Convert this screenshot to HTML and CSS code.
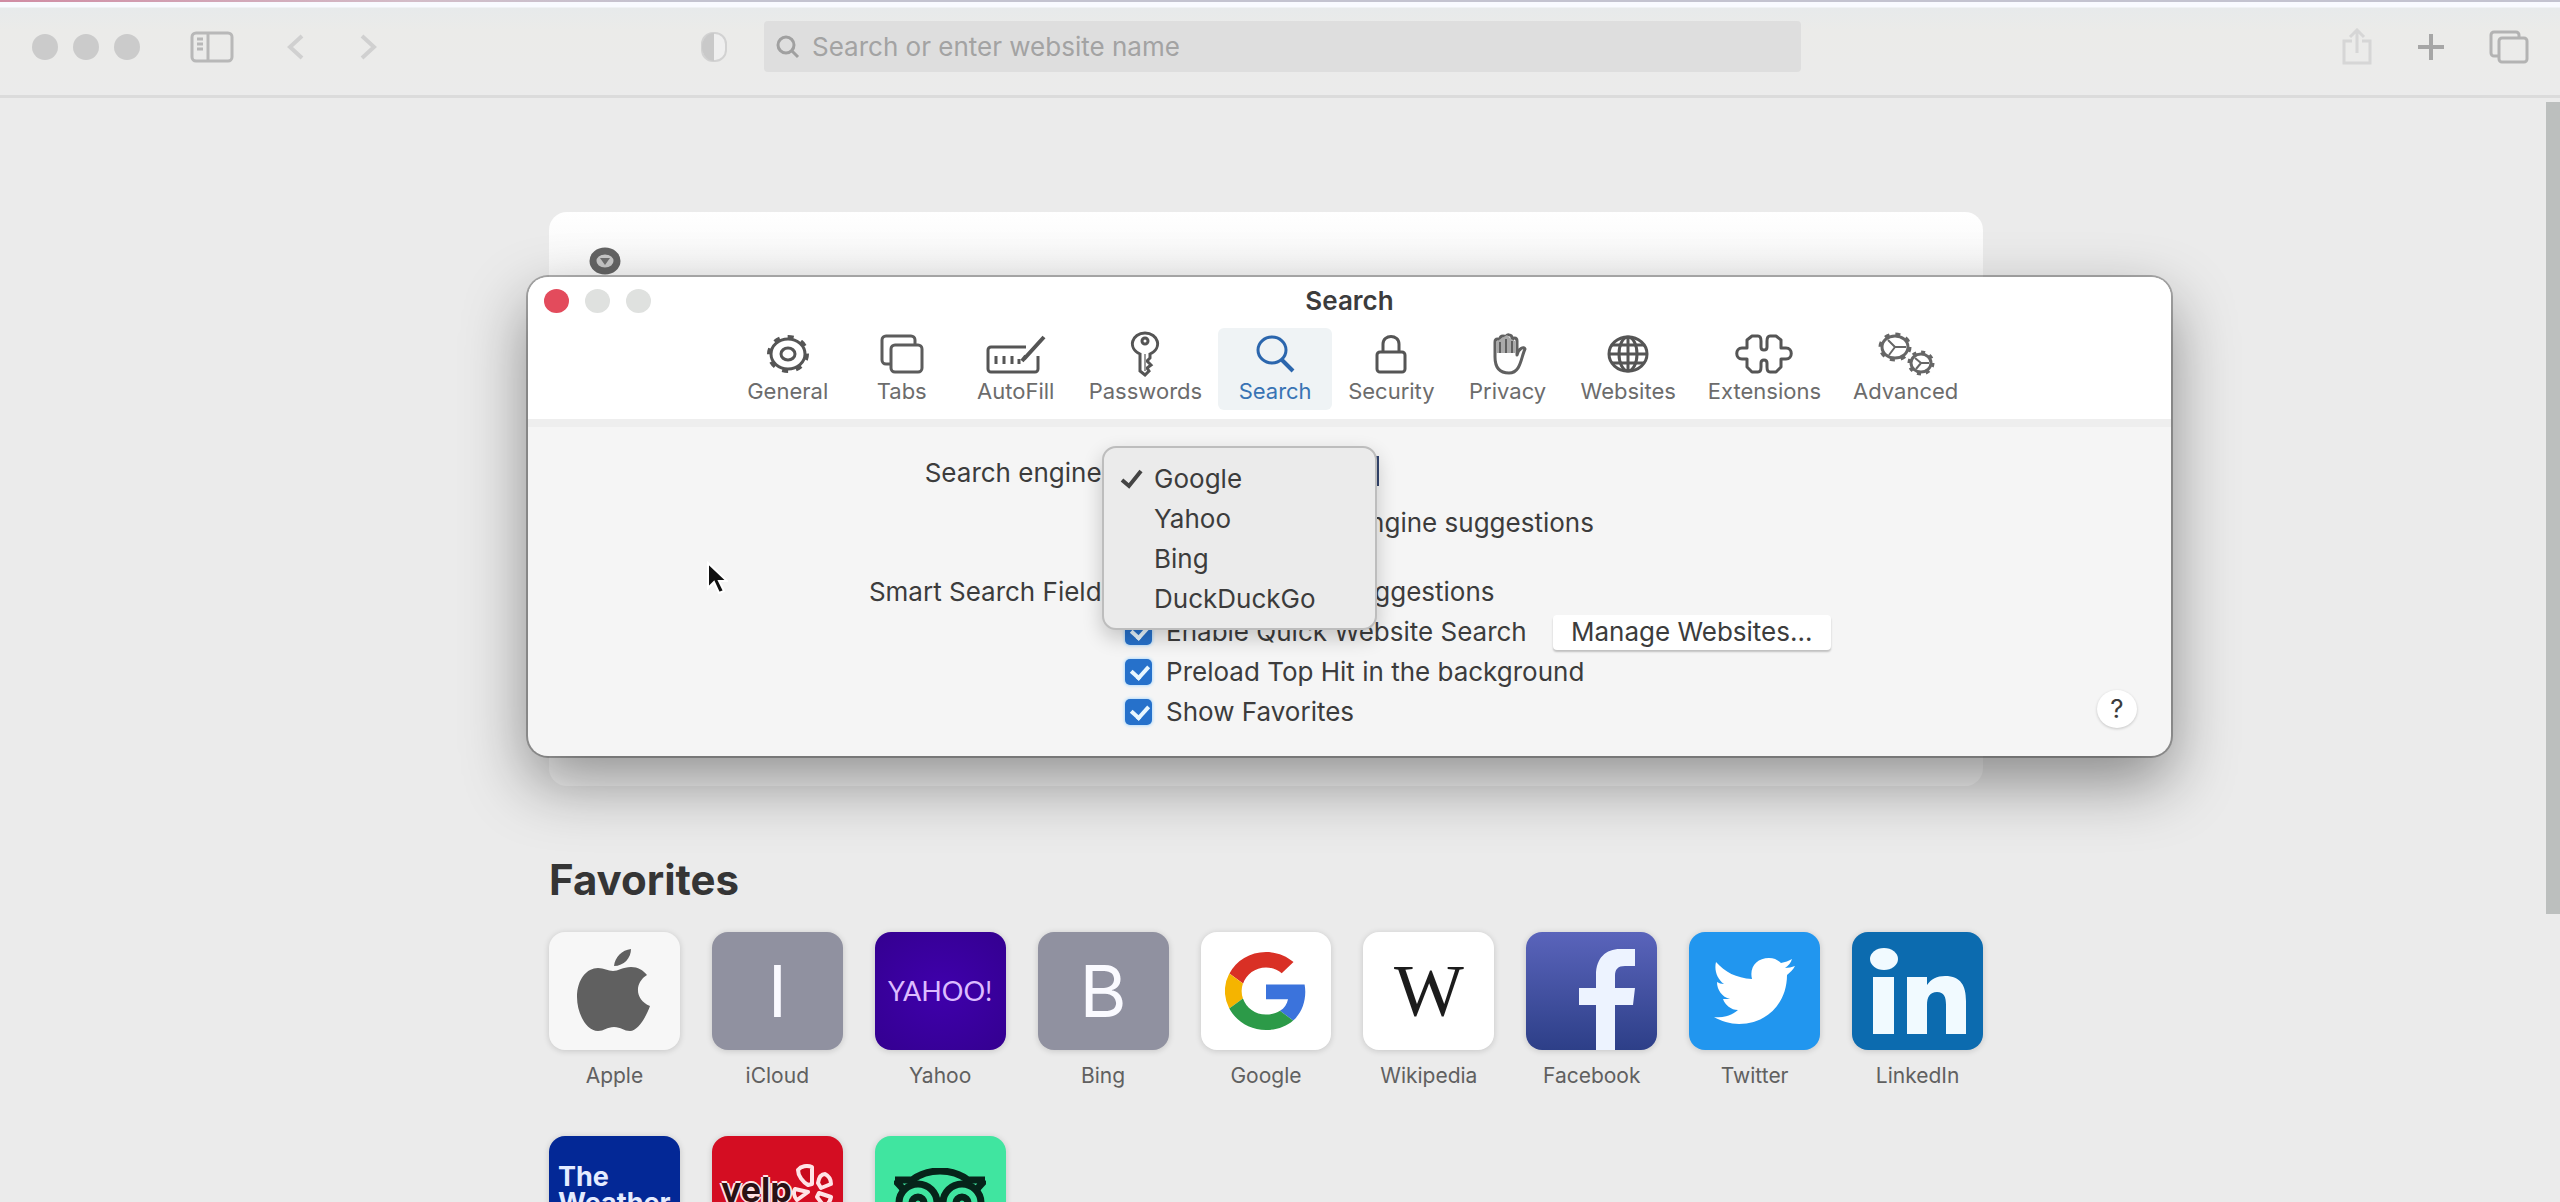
FILE: index.html
```html
<!DOCTYPE html>
<html lang="en">
<head>
<meta charset="utf-8">
<title>Search</title>
<link rel="stylesheet" href="styles.css">
</head>
<body>
<header class="toolbar">
  <div class="toolbar-left">
    <div class="lights"><span class="light"></span><span class="light"></span><span class="light"></span></div>
    <button class="tool" aria-label="Show sidebar"><svg width="44" height="32" viewBox="0 0 44 32" fill="none" stroke="#b8b8b8" stroke-width="3"><path d="M18 2v28" /><rect x="2" y="2" width="40" height="28" rx="4"/><path d="M7 8h6M7 13h6M7 18h6" stroke-width="3"/></svg></button>
    <nav class="history">
      <button class="tool" aria-label="Back"><svg width="18" height="26" viewBox="0 0 18 26" fill="none" stroke="#d0d0d0" stroke-width="4"><path d="M15 2 3 13l12 11"/></svg></button>
      <button class="tool" aria-label="Forward"><svg width="18" height="26" viewBox="0 0 18 26" fill="none" stroke="#d0d0d0" stroke-width="4"><path d="m3 2 12 11L3 24"/></svg></button>
    </nav>
  </div>
  <div class="address">
    <button class="tool" aria-label="Privacy report"><svg width="28" height="32" viewBox="0 0 28 32"><rect x="2" y="2" width="24" height="28" rx="11" fill="#efefef" stroke="#d2d2d2" stroke-width="2"/><path d="M14 2a12 14 0 0 0 0 28z" fill="#c9c9c9"/></svg></button>
    <label class="search-field">
      <svg width="24" height="24" viewBox="0 0 24 24" fill="none" stroke="#a0a0a0" stroke-width="3"><ellipse cx="10" cy="10" rx="8" ry="8"/><path d="m16 16 6 6"/></svg>
      <input type="text" placeholder="Search or enter website name" aria-label="Address">
    </label>
  </div>
  <div class="toolbar-right">
    <button class="tool" aria-label="Share"><svg width="32" height="38" viewBox="0 0 32 38" fill="none" stroke="#d6d6d6" stroke-width="3"><path d="M11 13H3v22h26V13h-8M16 25V3M9 9l7-7 7 7"/></svg></button>
    <button class="tool" aria-label="New tab"><svg width="28" height="28" viewBox="0 0 28 28" stroke="#a6a6a6" stroke-width="4"><path d="M14 1v26M1 14h26"/></svg></button>
    <button class="tool" aria-label="Tab overview"><svg width="40" height="34" viewBox="0 0 40 34" fill="none" stroke="#b3b3b3" stroke-width="3"><path d="M30 7V5a3 3 0 0 0-3-3H5a3 3 0 0 0-3 3v18a3 3 0 0 0 3 3h4"/><rect x="10" y="8" width="28" height="24" rx="3"/></svg></button>
  </div>
</header>

<main class="page">
  <div class="content">
    <section class="card" aria-label="Privacy Report">
      <svg width="32" height="28" viewBox="0 0 32 28"><ellipse cx="16" cy="14" rx="12" ry="10" fill="#c8c8c8" stroke="#646464" stroke-width="7"/><path d="M11 11h10l-5 7z" fill="#707070"/></svg>
    </section>
    <h1 class="heading">Favorites</h1>
    <ul class="favorites">
      <li><a href="#"><span class="tile tile-apple"><svg width="76" height="84" viewBox="0 0 76 84" fill="#606060"><path d="M38 17c1-9 8-16 17-17 0 9-7 17-17 17zM37 22c5 0 10-4 18-4 7 0 12 3 16 8-13 8-12 25 3 31-4 11-12 25-20 25-6 0-9-4-16-4s-10 4-16 4C10 82 1 64 1 48c0-18 10-29 21-29 6 0 10 3 15 3z"/></svg></span>Apple</a></li>
      <li><a href="#"><span class="tile tile-letter">I</span>iCloud</a></li>
      <li><a href="#"><span class="tile tile-yahoo">YAHOO!</span>Yahoo</a></li>
      <li><a href="#"><span class="tile tile-letter">B</span>Bing</a></li>
      <li><a href="#"><span class="tile"><svg width="82" height="78" viewBox="0 0 48 48" preserveAspectRatio="none"><path fill="#d93025" d="M24 9.500c3.500 0 6.700 1.200 9.200 3.600l6.900-6.900C35.900 2.400 30.500 0 24 0 14.600 0 6.500 5.400 2.600 13.200l8 6.200C12.400 13.700 17.700 9.500 24 9.500z"/><path fill="#3b73dc" d="M47 24.500c0-1.600-.2-3.100-.4-4.500H24v9h12.900c-.6 3-2.200 5.500-4.700 7.200l7.700 6C44.400 38 47 31.800 47 24.500z"/><path fill="#f5b400" d="M10.500 28.600A14.500 14.500 0 0 1 10.500 19.400l-8-6.200a24 24 0 0 0 0 21.600z"/><path fill="#2c9a48" d="M24 48c6.500 0 11.900-2.100 15.900-5.800l-7.700-6c-2.200 1.500-4.900 2.300-8.200 2.300-6.300 0-11.600-4.200-13.500-9.900l-8 6.200C6.500 42.600 14.600 48 24 48z"/></svg></span>Google</a></li>
      <li><a href="#"><span class="tile tile-wiki">W</span>Wikipedia</a></li>
      <li><a href="#"><span class="tile tile-facebook"><svg width="131" height="118" viewBox="0 0 131 118" fill="#edf3ff"><path d="M70 118V73H53V56h17V43c0-17 10-26 24-26h15v17h-10c-7 0-10 3-10 10v12h20l-2 17H89v45z"/></svg></span>Facebook</a></li>
      <li><a href="#"><span class="tile tile-twitter"><svg width="82" height="66" viewBox="0 0 82 66" fill="#fff"><path d="M2 4c9 10 20 16 36 17C35 9 43 0 55 0c5 0 9 2 12 5 4-1 8-2 11-4-1 4-4 7-7 9 3 0 7-1 10-2-2 4-5 6-8 9 0 29-21 49-48 49-9 0-18-3-25-7 9 1 17-1 24-7-7 0-13-5-15-11h7C8 39 3 32 3 24c2 1 4 2 7 2C3 21 0 12 2 4z"/></svg></span>Twitter</a></li>
      <li><a href="#"><span class="tile tile-linkedin"><svg width="96" height="86" viewBox="0 0 96 86" fill="#f1faff"><ellipse cx="14" cy="11" rx="14" ry="11"/><path d="M3 29h21v57H3zM37 29h20v8c4-6 10-9 18-9 16 0 21 10 21 25v33H76V57c0-8-2-13-9-13s-10 5-10 13v29H37z"/></svg></span>LinkedIn</a></li>
      <li><a href="#"><span class="tile tile-weather">The<br>Weather</span></a></li>
      <li><a href="#" aria-label="Yelp"><span class="tile tile-yelp">yelp<svg width="42" height="46" viewBox="0 0 42 46" fill="#c80a1c" stroke="#ffe3e6" stroke-width="4" stroke-linejoin="round"><path d="M6 6c3-4 9-5 14-3v17l-4 1C11 18 6 12 6 6zM26 19c1-6 4-9 7-9 4 2 6 6 6 10l-10 4zM27 29l12 4c-1 5-4 8-7 9l-7-9zM3 25l13 3-11 8c-3-3-4-8-2-11z"/></svg></span></a></li>
      <li><a href="#" aria-label="TripAdvisor"><span class="tile tile-trip"><svg width="92" height="68" viewBox="0 0 92 68" fill="none" stroke="#06241a" stroke-width="7"><path d="M1 12h17C34 0 58 0 74 12h17M1 12l8 9M91 12l-8 9"/><circle cx="24" cy="35" r="19"/><circle cx="68" cy="35" r="19"/><circle cx="24" cy="35" r="6"/><circle cx="68" cy="35" r="6"/><path d="m39 48 7 9 7-9"/></svg></span></a></li>
    </ul>
  </div>
</main>
<div class="scrollbar"></div>

<section class="window" role="dialog" aria-labelledby="window-title">
  <header class="window-head">
    <div class="titlebar">
      <div class="window-lights"><button class="dot dot-close" aria-label="Close"></button><span class="dot"></span><span class="dot"></span></div>
      <h2 id="window-title">Search</h2>
    </div>
    <nav class="tabs">
      <button class="tab"><svg width="44" height="40" viewBox="0 0 44 40" fill="none" stroke="#555" stroke-width="2"><ellipse cx="22" cy="20" rx="17" ry="15" stroke-width="3"/><ellipse cx="22" cy="20" rx="19" ry="17" stroke-width="4" stroke-dasharray="6 8"/><ellipse cx="22" cy="20" rx="7" ry="6" stroke-width="3"/></svg>General</button>
      <button class="tab"><svg width="44" height="40" viewBox="0 0 44 40" fill="none" stroke="#5c5c5c" stroke-width="3"><path d="M35 10V6a4 4 0 0 0-4-4H6a4 4 0 0 0-4 4v20a4 4 0 0 0 4 4h4"/><rect x="11" y="11" width="31" height="27" rx="4"/></svg>Tabs</button>
      <button class="tab"><svg width="60" height="40" viewBox="0 0 60 40" fill="none" stroke="#555" stroke-width="3"><path d="M40 13H5a3 3 0 0 0-3 3v19a3 3 0 0 0 3 3h44a3 3 0 0 0 3-3V22"/><path d="m38 25 20-22M36 27l4-5" stroke-width="4"/><path d="M10 22v8M18 22v8M26 22v8M33 25v5" stroke-width="3"/></svg>AutoFill</button>
      <button class="tab"><svg width="30" height="46" viewBox="0 0 30 46" fill="none" stroke="#555" stroke-width="3"><path d="M10 23C-3 17 2 2 15 2s18 15 5 21v4l-3 3 4 4-4 3 2 3-4 4-5-4z"/><circle cx="15" cy="10" r="3"/><path d="M15 23v17" stroke="#999" stroke-width="2"/></svg>Passwords</button>
      <button class="tab tab-active" aria-current="page"><svg width="40" height="38" viewBox="0 0 40 38" fill="none" stroke="#2b66ad" stroke-width="3"><ellipse cx="17" cy="15" rx="14" ry="13"/><path d="m27 25 11 11" stroke-width="4"/></svg>Search</button>
      <button class="tab"><svg width="32" height="40" viewBox="0 0 32 40" fill="none" stroke="#555" stroke-width="3"><path d="M8 18v-8c0-10 16-10 16 0v8"/><rect x="2" y="18" width="28" height="20" rx="3"/></svg>Security</button>
      <button class="tab"><svg width="38" height="42" viewBox="0 0 38 42" fill="none" stroke="#606060" stroke-width="3" stroke-linejoin="round"><path d="M6 24V9c0-4 5-4 5 0V6c0-4 6-4 6 0V4c0-3 6-3 6 1v3c0-4 5-4 5 0v14c2-7 7-9 8-6-4 8-4 24-16 24C9 40 6 33 6 24z" fill="#fff"/><path d="M7 9v11h19V8l-4-2-4-4-5 3z" fill="#aaa" stroke="none"/><path d="M11 9v11M17 6v14M23 8v12" stroke-width="2"/></svg>Privacy</button>
      <button class="tab"><svg width="44" height="40" viewBox="0 0 44 40" fill="none" stroke="#555" stroke-width="3"><ellipse cx="22" cy="20" rx="19" ry="17"/><ellipse cx="22" cy="20" rx="9" ry="17"/><path d="M22 3v34M6 11h32M3 20h38M6 29h32"/></svg>Websites</button>
      <button class="tab"><svg width="58" height="40" viewBox="0 0 58 40" fill="none" stroke="#555" stroke-width="3" stroke-linejoin="round"><path d="M12 14V6l5-4h6c3 0 3 3 3 5v6c0 4 6 4 6 0V7c0-2 0-5 3-5h6l5 4v8h5c7 0 7 11 0 11h-5v8l-5 5H35c-3 0-3-3-3-5v-4c0-4-6-4-6 0v4c0 2 0 5-3 5h-6l-5-5v-8H7c-7 0-7-11 0-11z"/></svg>Extensions</button>
      <button class="tab"><svg width="58" height="44" viewBox="0 0 58 44" fill="none" stroke="#666" stroke-width="3"><ellipse cx="18" cy="15" rx="13" ry="11"/><ellipse cx="18" cy="15" rx="15" ry="13" stroke-dasharray="5 6"/><path d="M18 15 11 8M18 15h11M18 15l-6 8" stroke-width="2"/><ellipse cx="44" cy="31" rx="10" ry="9"/><ellipse cx="44" cy="31" rx="12" ry="11" stroke-dasharray="4 5"/><path d="M44 31l-6-5M44 31h8M44 31l-5 6" stroke-width="2"/></svg>Advanced</button>
    </nav>
  </header>
  <div class="settings">
    <label class="name" for="engine">Search engine:</label>
    <div class="field engine-field">
      <select id="engine" class="engine"><option>Google</option><option>Yahoo</option><option>Bing</option><option>DuckDuckGo</option></select>
      <div class="menu" role="listbox" aria-label="Search engine">
        <button class="menu-item" role="option" aria-selected="true"><svg width="24" height="20" viewBox="0 0 24 20" fill="none" stroke="#444" stroke-width="4"><path d="m2 11 7 6L21 2"/></svg>Google</button>
        <button class="menu-item" role="option">Yahoo</button>
        <button class="menu-item" role="option">Bing</button>
        <button class="menu-item" role="option">DuckDuckGo</button>
      </div>
    </div>
    <div class="field field-wide"><label class="check"><input type="checkbox" checked>Include search engine suggestions</label></div>
    <span class="name name-group">Smart Search Field:</span>
    <div class="field-group">
      <label class="check"><input type="checkbox" checked>Include Safari Suggestions</label>
      <div class="check-row"><label class="check"><input type="checkbox" checked>Enable Quick Website Search</label><button class="manage">Manage Websites...</button></div>
      <label class="check"><input type="checkbox" checked>Preload Top Hit in the background</label>
      <label class="check"><input type="checkbox" checked>Show Favorites</label>
    </div>
    <button class="help" aria-label="Help">?</button>
  </div>
  <svg class="pointer" width="22" height="34" viewBox="0 0 22 34"><path d="M2 2v25l6-6 5 11 5-2-5-10h8z" fill="#111" stroke="#fff" stroke-width="2"/></svg>
</section>
</body>
</html>
```
FILE: styles.css
```css
* { box-sizing: border-box; }

body {
  position: relative;
  height: 100vh;
  margin: 0;
  overflow: hidden;
  display: flex;
  flex-direction: column;
  background: #ebebeb;
  color: #3c3c3c;
  font-family: Inter, "Liberation Sans", sans-serif;
  font-size: 26px;
}

button, input, select { font: inherit; color: inherit; }
button { padding: 0; border: 0; background: none; }
svg { display: block; flex: none; }

/* Browser toolbar */
.toolbar {
  flex: none;
  display: grid;
  grid-template-columns: 700px minmax(0, 1101px) 1fr;
  align-items: center;
  height: 98px;
  padding-bottom: 2px;
  border-bottom: 3px solid #dbdbdb;
  background:
    linear-gradient(90deg, #d08ca4, #d3bcc8 16%, #c3c3d0 26%) top / 100% 2px no-repeat,
    linear-gradient(#f8faff 0 7px, #e7eaeb 8px, #ebebe9 30px, #ebebeb);
}
.toolbar-left { display: flex; align-items: center; padding-left: 32px; }
.lights { display: flex; gap: 15px; margin-right: 50px; }
.light { width: 26px; height: 26px; border-radius: 50%; background: #cbcbcb; }
.history { display: flex; gap: 54px; margin-left: 53px; }
.address { display: flex; align-items: center; gap: 36px; }
.search-field {
  flex: 1;
  display: flex;
  align-items: center;
  gap: 12px;
  height: 51px;
  padding: 0 12px;
  border-radius: 4px;
  background: #dedede;
}
.search-field input {
  flex: 1;
  min-width: 0;
  padding: 0;
  border: 0;
  background: none;
}
.search-field input::placeholder { color: #a3a3a3; opacity: 1; }
.toolbar-right { display: flex; justify-content: flex-end; align-items: center; gap: 44px; padding-right: 31px; }

/* Start page */
.page { flex: 1; min-height: 0; padding: 114px 28px 0 0; overflow: hidden; }
.content { max-width: 1434px; margin: 0 auto; }
.card {
  height: 574px;
  padding: 35px 40px;
  border-radius: 18px;
  background: linear-gradient(#fff, #f7f7f7 60px);
}
.heading { margin: 70px 0 0; font-size: 42px; line-height: 48px; font-weight: 700; color: #353535; }
.favorites {
  display: grid;
  grid-template-columns: repeat(9, 1fr);
  gap: 48px 32px;
  margin: 28px 0 0;
  padding: 0;
  list-style: none;
}
.favorites a {
  display: flex;
  flex-direction: column;
  align-items: center;
  gap: 14px;
  color: #606060;
  font-size: 21px;
  line-height: 24px;
  text-decoration: none;
}
.tile {
  display: flex;
  align-items: center;
  justify-content: center;
  width: 100%;
  height: 118px;
  border-radius: 16px;
  overflow: hidden;
  background: #fff;
  box-shadow: 0 1px 6px rgba(0, 0, 0, .16);
}
.tile-apple { background: #f7f7f7; }
.tile-letter { background: #9091a0; color: #fafaff; font-size: 72px; }
.tile-yahoo { background: radial-gradient(#3f00ac, #340090); color: #dcbcff; font-size: 27px; font-family: Lato, sans-serif; }
.tile-wiki { color: #1c1c1c; font: 74px "Liberation Serif", serif; }
.tile-facebook { background: linear-gradient(#5a64bb, #2d3f88); }
.tile-twitter { background: #2196ef; }
.tile-linkedin { background: #0c6baf; }
.tile-weather, .tile-yelp, .tile-trip { height: 131px; }
.tile-weather, .tile-yelp { align-items: flex-start; font-weight: 700; }
.tile-weather {
  justify-content: flex-start;
  padding: 28px 0 0 9px;
  background: #032896;
  color: #e5ecff;
  font-size: 27px;
  line-height: 26px;
}
.tile-yelp {
  padding-top: 28px;
  background: #d40d22;
  color: #2a1114;
  font-size: 34px;
  line-height: 52px;
  text-shadow: 2px 0 #ffe3e6, -2px 0 #ffe3e6, 0 2px #ffe3e6, 0 -2px #ffe3e6;
}
.tile-trip { background: #40e5a0; }

.scrollbar {
  position: absolute;
  top: 102px;
  right: 0;
  width: 14px;
  height: calc(100% - 390px);
  background: #bcbfbe;
}

/* Preferences window */
.window {
  position: absolute;
  top: 277px;
  left: calc(50% - 752px);
  width: 1643px;
  border-radius: 20px;
  background: #f5f5f5;
  box-shadow: 0 0 0 2px rgba(0, 0, 0, .28), 0 26px 64px rgba(0, 0, 0, .42);
}
.window-head {
  height: 150px;
  border-radius: 20px 20px 0 0;
  border-bottom: 8px solid #eee;
  background: #fff;
}
.titlebar {
  display: grid;
  grid-template-columns: 1fr auto 1fr;
  align-items: center;
  height: 48px;
  padding: 0 16px;
}
.titlebar h2 { margin: 0; font-size: 26px; line-height: 32px; font-weight: 600; }
.window-lights { display: flex; gap: 16px; }
.dot { width: 25px; height: 24px; border-radius: 50%; background: #dfe1df; }
.dot-close { background: #e34b5c; }
.tabs { display: flex; justify-content: center; padding: 3px 0 0 6px; }
.tab {
  display: grid;
  grid-template-rows: 46px 28px;
  justify-items: center;
  align-items: center;
  min-width: 114px;
  height: 82px;
  padding: 3px 16px 5px;
  color: #6c6c6c;
  font-size: 22px;
  line-height: 28px;
}
.tab-active { border-radius: 6px; background: #eff3f5; color: #3873b4; }

.settings {
  position: relative;
  display: grid;
  grid-template-columns: 5fr 9fr;
  column-gap: 16px;
  padding: 26px 0 24px;
  line-height: 40px;
}
.name { text-align: right; }
.name-group { margin-top: 29px; }
.field { position: relative; height: 40px; }
.field-wide { grid-column: 2; margin-top: 10px; }
.field-group { margin-top: 29px; }
.engine {
  width: 254px;
  height: 30px;
  border: 0;
  border-right: 4px solid #34466f;
  background: #fff;
}
.check { display: flex; align-items: center; gap: 14px; height: 40px; }
.check input {
  appearance: none;
  width: 27px;
  height: 26px;
  margin: 0;
  border-radius: 5px;
  background: #2671cb;
  box-shadow: 0 0 3px 1px #b5dcfc;
}
.check input::before {
  content: "";
  display: block;
  width: 8px;
  height: 13px;
  margin: 3px 0 0 9px;
  border: solid #e8f7ff;
  border-width: 0 4px 4px 0;
  transform: rotate(42deg);
}
.check-row { display: flex; align-items: center; gap: 26px; }
.manage {
  width: 278px;
  height: 35px;
  border-radius: 4px;
  background: #fff;
  box-shadow: 0 2px 2px rgba(0, 0, 0, .22);
  line-height: 32px;
}
.help {
  position: absolute;
  right: 34px;
  bottom: 28px;
  width: 40px;
  height: 38px;
  border-radius: 50%;
  background: #fff;
  box-shadow: 0 1px 3px rgba(0, 0, 0, .2);
  line-height: 38px;
}
.menu {
  position: absolute;
  z-index: 1;
  top: -7px;
  left: -23px;
  width: 275px;
  padding: 11px 0 9px;
  border: 2px solid #bdbdbd;
  border-radius: 14px;
  background: #ebebeb;
  box-shadow: 0 8px 20px rgba(0, 0, 0, .2);
}
.menu-item {
  position: relative;
  display: block;
  width: 100%;
  height: 40px;
  padding-left: 50px;
  text-align: left;
}
.menu-item svg { position: absolute; left: 16px; top: 10px; }
.pointer { position: absolute; left: 178px; top: 284px; }
```
